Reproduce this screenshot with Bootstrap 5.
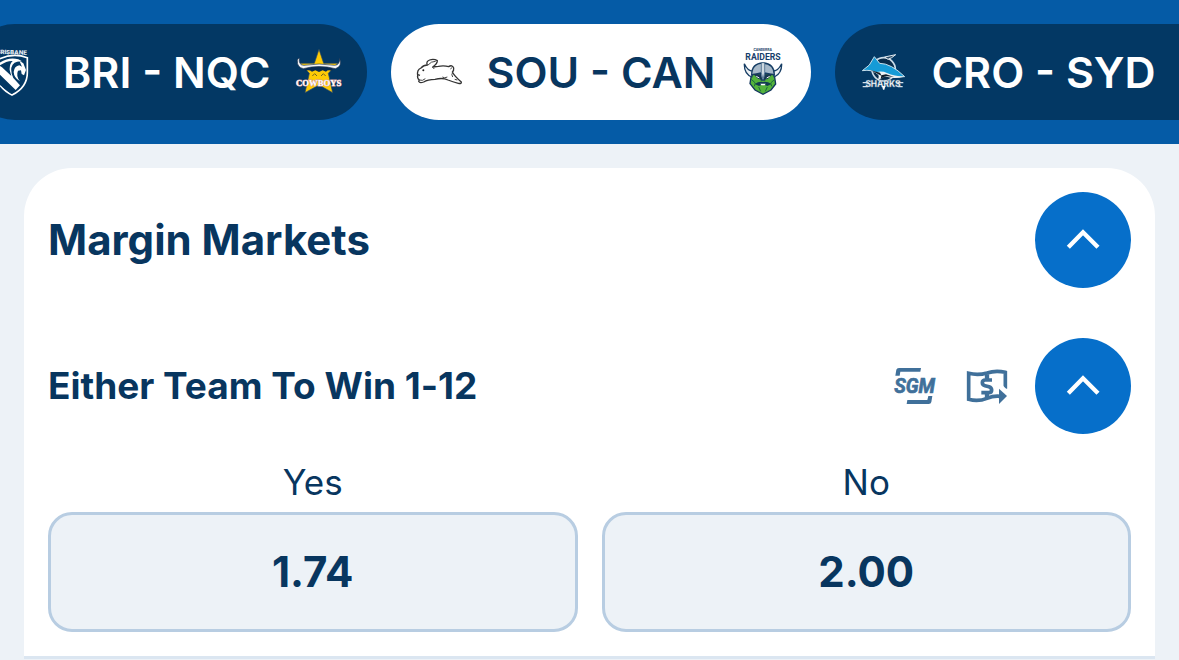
<!DOCTYPE html>
<html lang="en">
<head>
<meta charset="utf-8">
<meta name="viewport" content="width=device-width, initial-scale=1">
<title>SOU - CAN</title>
<link href="https://cdn.jsdelivr.net/npm/bootstrap@5.3.0/dist/css/bootstrap.min.css" rel="stylesheet">
<style>
  body { font-family: Inter, "Liberation Sans", sans-serif; font-feature-settings: "calt" 0; background: #edf2f7; color: #08365f; }
  .match-bar { background: #055ba6; padding: 24px 0; }
  .match-strip { gap: 24px; margin-left: -33px; }
  .match-pill { gap: 24px; height: 96px; padding: 0 24px; border: 0; border-radius: 48px; background: #033864; color: #fff; font-size: 43px; font-weight: 600; line-height: 48px; white-space: nowrap; }
  .match-pill.current { background: #fff; color: #08365f; }
  .glyph { width: 48px; height: 48px; flex: none; }
  .page { padding: 24px 24px 0; }
  .panel { background: #fff; border-radius: 48px 48px 0 0; }
  .market { padding: 24px 24px 26px; }
  .market + .market { border-bottom: 3px solid #dbe6f1; padding-bottom: 24px; }
  .title-lg { font-size: 42px; font-weight: 700; line-height: 48px; }
  .title-md { font-size: 37px; font-weight: 700; line-height: 48px; }
  .toggle { width: 96px; height: 96px; border: 0; background: #066fca; }
  .odds { gap: 24px; margin-top: 24px; }
  .outcome { font-size: 35px; line-height: 48px; }
  .price { height: 120px; margin-top: 6px; border: 3px solid #b8cde2; border-radius: 24px; background: #edf2f7; color: #08365f; font-size: 42px; font-weight: 700; line-height: 48px; }
  .tools { gap: 24px; }
</style>
</head>
<body>
<header class="match-bar overflow-hidden">
  <nav class="match-strip d-flex" aria-label="Matches">
    <button type="button" class="match-pill d-flex align-items-center flex-shrink-0">
      <svg class="glyph" viewBox="-27 84 144 144" aria-hidden="true">
        <text x="35" y="103" text-anchor="middle" font-size="18" font-weight="800" fill="#e8eef5" transform="rotate(2 35 103)">BRISBANE</text>
        <path d="M-12 122Q35 96 82 113V158Q82 202 36 225Q-10 202 -12 158Z" fill="none" stroke="#fff" stroke-width="5"/>
        <path d="M-8 133Q25 108 55 118L66 124Q40 122 34 143Q32 158 40 174L60 196L47 210L-6 158V144Z" fill="#fff"/>
        <path d="M-2 137Q20 122 38 123Q28 132 29 150L34 168L6 142ZM-6 168L40 217L34 222L-6 190Z" fill="#033864"/>
        <path d="M58 122L70 130L78 150L72 166L65 162L63 151L54 152Q47 168 60 184Q42 174 41 156Q43 138 58 136L66 140Z" fill="#fff"/>
      </svg>
      <span>BRI - NQC</span>
      <svg class="glyph" viewBox="45 36 144 144" aria-hidden="true">
        <path d="M117 40L131 82H174L145 112L158 170L117 147L75 170L88 112L60 82H103Z" fill="#ffcb05" stroke="#24466b" stroke-width="2"/>
        <path d="M70 94Q116 84 165 94L155 104Q143 101 138 107L128 103L117 108L106 103L96 107Q88 101 77 104Z" fill="#092b50"/>
        <path d="M97 120L104 113L111 120M123 120L130 113L137 120" fill="none" stroke="#766624" stroke-width="3"/>
        <path d="M52 74Q51 94 70 98Q117 85 166 98Q188 92 179 67Q180 87 164 88Q117 80 72 88Q55 88 58 66Q51 68 52 74Z" fill="#f5f6f8" stroke="#1d3350" stroke-width="2"/>
        <text x="116" y="151" text-anchor="middle" font-family="Liberation Serif, serif" font-size="26" font-weight="700" fill="#fff" stroke="#d9a0a5" stroke-width="3" paint-order="stroke">COWBOYS</text>
      </svg>
    </button>
    <button type="button" class="match-pill current d-flex align-items-center flex-shrink-0" aria-current="true">
      <svg class="glyph" viewBox="45 24 144 144" aria-hidden="true">
        <path d="M82 75Q77 65 89 60Q101 55 112 62Q112 71 98 81L115 79Q132 76 146 80Q156 73 161 84Q162 92 157 96Q164 109 184 126Q185 132 175 130Q158 126 144 120Q128 112 105 118Q83 118 71 126Q59 131 56 124L58 120Q51 114 53 106Q50 90 63 84Q71 75 82 75Z" fill="#fff" stroke="#333" stroke-width="4" stroke-linejoin="round"/>
        <path d="M83 76Q94 63 107 64M59 120Q67 124 76 116M127 111Q134 116 142 111M158 97Q153 104 158 111M98 82L103 87M156 83L151 87M172 120L164 118" fill="none" stroke="#444" stroke-width="3"/>
        <circle cx="70" cy="91" r="3" fill="#222"/>
        <path d="M53 104L60 106" stroke="#333" stroke-width="4"/>
      </svg>
      <span>SOU - CAN</span>
      <svg class="glyph" viewBox="27 36 144 144" aria-hidden="true">
        <text x="98" y="46" text-anchor="middle" font-size="10" font-weight="700" fill="#24466b">CANBERRA</text>
        <text x="99" y="72" text-anchor="middle" font-family="Roboto, sans-serif" font-size="26" font-weight="700" fill="#173e6b">RAIDERS</text>
        <path d="M65 111L60 143L75 162L99 175L123 162L137 144L132 111Z" fill="#54b33c" stroke="#12365d" stroke-width="4"/>
        <path d="M43 83Q42 113 65 123L71 105Q54 107 43 83ZM155 83Q156 112 133 123L127 105Q144 106 155 83Z" fill="#eef2f5" stroke="#173e65" stroke-width="4"/>
        <path d="M65 117Q65 82 99 81Q133 83 133 117L106 111L104 132H94L91 111Z" fill="#a7b9c9" stroke="#173e65" stroke-width="4"/>
        <path d="M94 80H104V110L99 130L94 110Z" fill="#ced9e1" stroke="#315679" stroke-width="2"/>
        <path d="M69 113L91 115L97 131L85 129ZM129 113L107 115L101 131L113 129Z" fill="#173752"/>
        <path d="M79 121L88 126M119 121L110 126" stroke="#fff" stroke-width="3"/>
        <path d="M74 144Q86 136 99 138Q112 136 124 144L112 150L99 145L87 150Z" fill="#123b51"/>
        <path d="M91 143H107L104 148H94Z" fill="#fff"/>
        <path d="M64 130L76 141L73 151M134 130L122 141L125 151M86 153L92 166M112 153L106 166" fill="none" stroke="#1a6c3d" stroke-width="3"/>
      </svg>
    </button>
    <button type="button" class="match-pill d-flex align-items-center flex-shrink-0">
      <svg class="glyph" viewBox="27 24 144 144" aria-hidden="true">
        <circle cx="101" cy="88" r="35" fill="#082c4b" stroke="#cbdbe7" stroke-width="5"/>
        <path d="M104 51L137 44L125 53L114 58Z" fill="#2b4c68" stroke="#e4edf3" stroke-width="3"/>
        <path d="M37 92L58 75L73 50L89 70Q123 70 164 110L130 111L103 103L91 115L85 103Q66 87 37 92Z" fill="#159bd7" stroke="#c8dfeb" stroke-width="3"/>
        <path d="M62 89Q70 95 79 96Q97 92 111 99Q133 109 163 110Q131 119 105 109L84 121L87 105Z" fill="#eef3f5"/>
        <path d="M62 91L90 98L94 106L108 103L132 111L107 108L92 116L94 107Z" fill="#111d29"/>
        <text x="99" y="141" text-anchor="middle" font-size="25" font-weight="800" fill="#fff" stroke="#4d7390" stroke-width="1">SHARKS</text>
        <path d="M38 128H56M142 128H160M38 140H54M144 140H158" stroke="#d3e0ea" stroke-width="4"/>
        <path d="M96 138H106L103 149H99Z" fill="#fff"/>
      </svg>
      <span>CRO - SYD</span>
      <span class="glyph"></span>
    </button>
  </nav>
</header>

<main class="page">
  <div class="panel">
    <section class="market">
      <div class="d-flex align-items-center justify-content-between">
        <h1 class="title-lg mb-0">Margin Markets</h1>
        <button type="button" class="toggle rounded-circle d-flex align-items-center justify-content-center p-0" aria-label="Collapse Margin Markets">
          <svg class="glyph" viewBox="537 96 144 144" aria-hidden="true"><path d="M565 190L609 145L654 190" fill="none" stroke="#fff" stroke-width="13"/></svg>
        </button>
      </div>
    </section>
    <section class="market">
      <div class="d-flex align-items-center justify-content-between">
        <h2 class="title-md mb-0">Either Team To Win 1-12</h2>
        <div class="tools d-flex align-items-center">
          <svg class="glyph" viewBox="33 96 144 144" role="img" aria-label="Same game multi">
            <path d="M46 137L49 119Q50 114 57 114H123L121 125H61L59 137ZM145 198H157L154 216Q153 222 146 222H80L82 210H142Z" fill="#40709a"/>
            <text x="104" y="189" text-anchor="middle" font-family="Roboto, sans-serif" font-size="58" font-weight="700" font-style="italic" fill="#40709a" stroke="#40709a" stroke-width="2">SGM</text>
          </svg>
          <svg class="glyph" viewBox="249 96 144 144" role="img" aria-label="Cash out">
            <path d="M376 176V127Q347 120 321 129Q294 137 266 130V208Q294 216 321 205Q340 197 360 199" fill="none" stroke="#40709a" stroke-width="11"/>
            <path d="M366 164L383 181V183H366Z" fill="#fff"/>
            <path d="M357 176L381 198L357 222Z" fill="#40709a"/>
            <path d="M336 150H316Q307 150 307 158Q307 165 315 167L327 170Q335 173 335 180Q335 188 326 188H304" fill="none" stroke="#40709a" stroke-width="11"/>
            <path d="M321 133V150M321 188V204" stroke="#40709a" stroke-width="13"/>
          </svg>
          <button type="button" class="toggle rounded-circle d-flex align-items-center justify-content-center p-0" aria-label="Collapse Either Team To Win 1-12">
            <svg class="glyph" viewBox="537 96 144 144" aria-hidden="true"><path d="M565 190L609 145L654 190" fill="none" stroke="#fff" stroke-width="13"/></svg>
          </button>
        </div>
      </div>
      <div class="odds d-flex text-center">
        <div class="flex-fill w-50">
          <label class="outcome d-block" for="yes">Yes</label>
          <button type="button" class="price d-block w-100" id="yes">1.74</button>
        </div>
        <div class="flex-fill w-50">
          <label class="outcome d-block" for="no">No</label>
          <button type="button" class="price d-block w-100" id="no">2.00</button>
        </div>
      </div>
    </section>
  </div>
</main>
<script src="https://cdn.jsdelivr.net/npm/bootstrap@5.3.0/dist/js/bootstrap.bundle.min.js"></script>
</body>
</html>
